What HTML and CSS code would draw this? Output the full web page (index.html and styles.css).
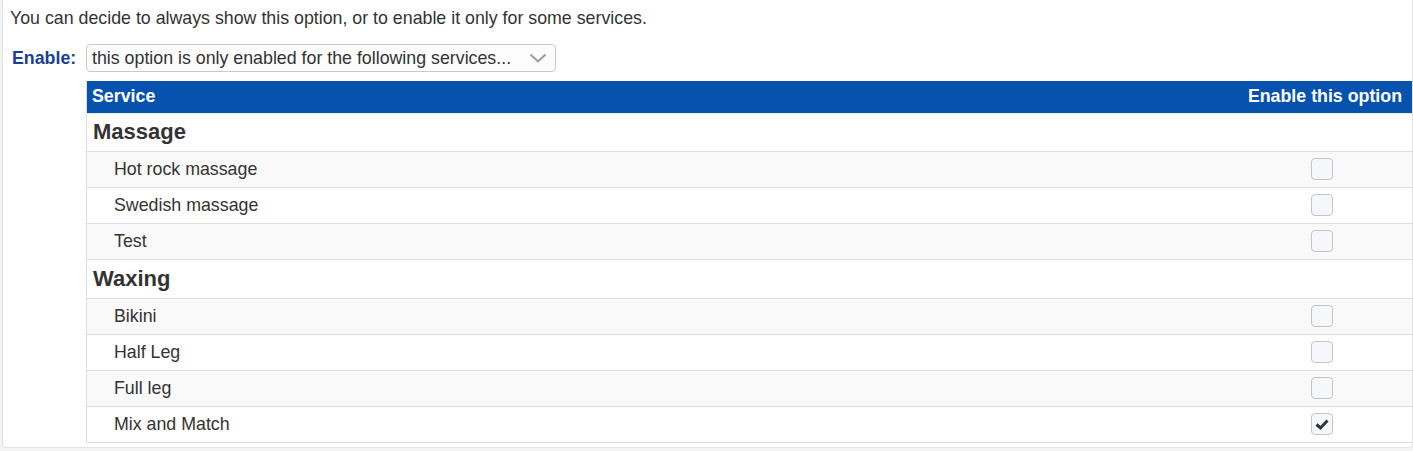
FILE: index.html
```html
<!DOCTYPE html>
<html lang="en">
<head>
    <meta charset="UTF-8">
    <meta name="viewport" content="width=device-width, initial-scale=1.0">
    <title>Option availability</title>
    <link rel="stylesheet" href="styles.css">
</head>
<body>
    <div class="panel">
        <p class="intro">You can decide to always show this option, or to enable it only for some services.</p>

        <div class="enable-row">
            <label class="enable-label">Enable:</label>
            <div class="select-box">
                <span class="select-text">this option is only enabled for the following services...</span>
                <svg class="chevron" width="18" height="10" viewBox="0 0 18 10">
                    <path d="M1.5 1.5 L9 8.5 L16.5 1.5" fill="none" stroke="#9a9a9a" stroke-width="2"/>
                </svg>
            </div>
        </div>

        <table class="services">
            <thead>
                <tr>
                    <th class="col-service">Service</th>
                    <th class="col-enable">Enable this option</th>
                </tr>
            </thead>
            <tbody>
                <tr class="group first">
                    <td colspan="2">Massage</td>
                </tr>
                <tr class="item odd">
                    <td class="name">Hot rock massage</td>
                    <td class="check"><span class="box"></span></td>
                </tr>
                <tr class="item">
                    <td class="name">Swedish massage</td>
                    <td class="check"><span class="box"></span></td>
                </tr>
                <tr class="item odd">
                    <td class="name">Test</td>
                    <td class="check"><span class="box"></span></td>
                </tr>
                <tr class="group">
                    <td colspan="2">Waxing</td>
                </tr>
                <tr class="item odd">
                    <td class="name">Bikini</td>
                    <td class="check"><span class="box"></span></td>
                </tr>
                <tr class="item">
                    <td class="name">Half Leg</td>
                    <td class="check"><span class="box"></span></td>
                </tr>
                <tr class="item odd">
                    <td class="name">Full leg</td>
                    <td class="check"><span class="box"></span></td>
                </tr>
                <tr class="item">
                    <td class="name">Mix and Match</td>
                    <td class="check">
                        <span class="box checked">
                            <svg width="20" height="20" viewBox="0 0 20 20">
                                <path d="M4.5 10.5 L8.5 14 L15.5 6.5" fill="none" stroke="#333" stroke-width="3"/>
                            </svg>
                        </span>
                    </td>
                </tr>
            </tbody>
        </table>
    </div>
</body>
</html>
```

FILE: styles.css
```css
/* Reset */
* {
    margin: 0;
    padding: 0;
    box-sizing: border-box;
}

body, html {
    font-family: "Liberation Sans", Arial, sans-serif;
    font-size: 17.8px;
    color: #333;
    background-color: #f4f4f4;
}

/* Panel */
.panel {
    margin-left: 2px;
    padding: 8px 0 4px 7px;
    background-color: #ffffff;
    border: 1px solid #e2e2e2;
    border-top: none;
    border-radius: 0 0 4px 4px;
}

.intro {
    line-height: 20px;
}

/* Enable select */
.enable-row {
    display: flex;
    align-items: center;
    margin-top: 16px;
}

.enable-label {
    width: 74px;
    margin-left: 2px;
    font-weight: bold;
    color: #1c3f94;
}

.select-box {
    display: flex;
    align-items: center;
    justify-content: space-between;
    width: 470px;
    height: 28px;
    padding: 0 8px 0 5px;
    border: 1px solid #c9c9c9;
    border-radius: 4px;
    background-color: #fcfcfc;
}

.chevron {
    display: block;
}

/* Services table */
.services {
    width: calc(100% - 76px);
    margin: 9px 0 0 76px;
    border-collapse: collapse;
    border-left: 1px solid #dddddd;
    border-bottom: 1px solid #dddddd;
}

.services th {
    height: 32px;
    padding: 0 5px;
    background-color: #0652ad;
    color: #ffffff;
    text-align: left;
    border-bottom: 1px solid #e6e9ef;
}

.services th.col-enable {
    text-align: right;
    padding-right: 10px;
}

.services td {
    border-top: 1px solid #dddddd;
}

.group td {
    height: 39px;
    padding: 0 6px;
    font-size: 22px;
    font-weight: bold;
}

.group.first td {
    height: 38px;
    border-top: none;
}

.item td {
    height: 36px;
}

.item.odd td {
    background-color: #f9f9f9;
}

.item .name {
    padding-left: 27px;
}

.item .check {
    width: 200px;
    text-align: right;
    padding-right: 79px;
}

.box {
    display: inline-block;
    width: 22px;
    height: 22px;
    vertical-align: middle;
    border: 1px solid #c4c4c4;
    border-radius: 4px;
    background-color: #f5f7fa;
}

.box svg {
    display: block;
}
```
